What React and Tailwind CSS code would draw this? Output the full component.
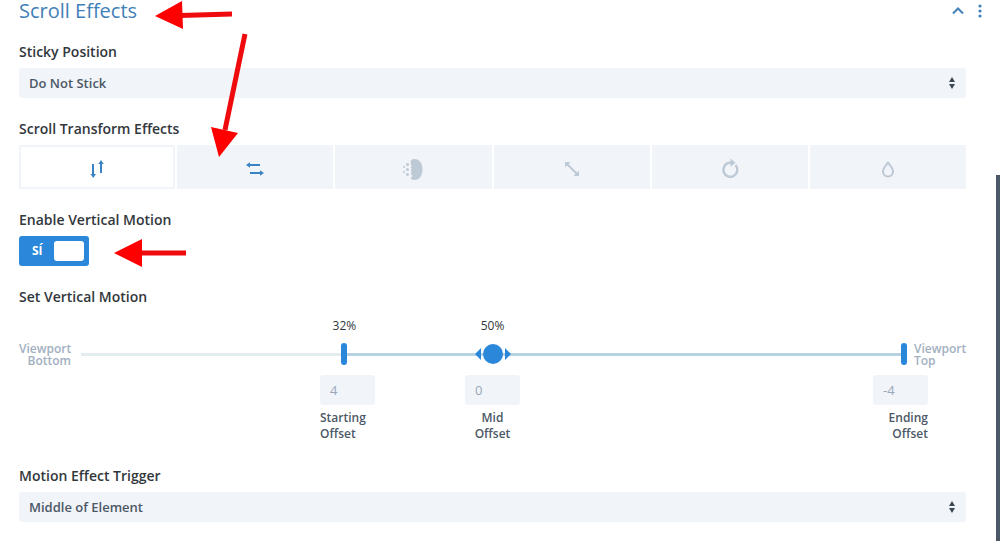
import React, { useState } from 'react';
import clsx from 'clsx';

const TABS = [
  { id: 'vertical', label: 'Vertical Motion', enabled: true },
  { id: 'horizontal', label: 'Horizontal Motion', enabled: true },
  { id: 'fade', label: 'Fading In and Out', enabled: false },
  { id: 'scale', label: 'Scaling Up and Down', enabled: false },
  { id: 'rotate', label: 'Rotating', enabled: false },
  { id: 'blur', label: 'Blur', enabled: false },
];

const OFFSETS = [
  { id: 'start', top: 'Starting', value: '4', className: 'col-start-2 justify-self-start', align: 'text-left' },
  { id: 'mid', top: 'Mid', value: '0', className: 'col-start-3 justify-self-start', align: 'text-center' },
  { id: 'end', top: 'Ending', value: '-4', className: 'col-start-4 justify-self-start', align: 'text-right' },
];

// All tab icons share a 28x28 box
function TabIcon({ id }) {
  const shapes = {
    vertical: (
      <>
        <path d="M10 9v11M18 8v10" stroke="currentColor" strokeWidth="2" />
        <path d="M7.500 19h5.500l-2.750 4zM15.250 9h5.500L18 5z" fill="currentColor" />
      </>
    ),
    horizontal: (
      <>
        <path d="M8 10h11M9 18h11" stroke="currentColor" strokeWidth="2" />
        <path d="M9 7.250v5.500L5 10zM19 15.250v5.500L23 18z" fill="currentColor" />
      </>
    ),
    fade: (
      <>
        <path d="M15.500 4C20.500 4 23.500 8.500 23.500 14.500S20.500 25 15.500 25c-2.500 0-4-1-4-2.500 1.500 .2 2.300-1.300 1.500-2.500-1.500 0-1.500-2.500 0-3-1.500-.5-1.500-2.500 0-3-1.500-.5-1.500-2.500 0-3-1.500-.5-1-2.300-1.500-3.500 0-2 1.500-3.500 4-3.500z" fill="currentColor" />
        <g fill="currentColor">
          <circle cx="8.500" cy="9.500" r="1.500" />
          <circle cx="8.500" cy="14.500" r="1.500" />
          <circle cx="8.500" cy="19.500" r="1.500" />
          <circle cx="5" cy="12" r="1" />
          <circle cx="5" cy="17" r="1" />
        </g>
      </>
    ),
    scale: (
      <>
        <path d="M9 9l10 10" stroke="currentColor" strokeWidth="2" />
        <path d="M7 7h5.500L7 12.500zM21 21h-5.500l5.500-5.500z" fill="currentColor" />
      </>
    ),
    rotate: (
      <>
        <path d="M19.500 10a7 7 0 1 1-6-2.200h2" fill="none" stroke="currentColor" strokeWidth="2.400" />
        <path d="M14.500 3.500l5 4.300-5 4.300z" fill="currentColor" />
      </>
    ),
    blur: (
      <path d="M14 7.500c2 3 5 5.500 5 9a5 5 0 0 1-10 0c0-3.500 3-6 5-9z" fill="none" stroke="currentColor" strokeWidth="2" strokeLinejoin="round" />
    ),
  };
  return (
    <svg viewBox="0 0 28 28" className="size-7" aria-hidden="true">
      {shapes[id]}
    </svg>
  );
}

function SelectField({ id, label, options }) {
  return (
    <div className="flex flex-col gap-1.5">
      <label htmlFor={id} className="text-sm leading-5 font-semibold text-[#32373c]">{label}</label>
      <div className="relative">
        <select
          id={id}
          className="block h-[30px] w-full appearance-none rounded-[3px] bg-[#f1f4f9] px-2.5 pt-0.5 text-[13px] font-semibold text-[#4c5866]"
        >
          {options.map((option) => <option key={option}>{option}</option>)}
        </select>
        <svg viewBox="0 0 6 12" className="pointer-events-none absolute top-[9px] right-[11px] h-3 w-1.5 fill-[#3e4751]" aria-hidden="true">
          <path d="M0 5l3-5 3 5zM0 7h6l-3 5z" />
        </svg>
      </div>
    </div>
  );
}

const rangeBase =
  'pointer-events-none absolute top-0 h-6 appearance-none bg-transparent [&::-webkit-slider-thumb]:pointer-events-auto [&::-webkit-slider-thumb]:appearance-none [&::-webkit-slider-thumb]:bg-[#2b87da]';
const barThumb =
  '-left-[3px] w-[calc(100%+6px)] [&::-webkit-slider-thumb]:h-[22px] [&::-webkit-slider-thumb]:w-1.5 [&::-webkit-slider-thumb]:rounded-[3px]';
const roundThumb =
  '-left-2.5 w-[calc(100%+20px)] [&::-webkit-slider-thumb]:size-5 [&::-webkit-slider-thumb]:rounded-full';

function MotionSlider() {
  const [start, setStart] = useState(32);
  const [mid, setMid] = useState(50);
  const [end, setEnd] = useState(100);

  return (
    <div className="flex flex-col pt-[11px] pb-[3px]">
      <div className="flex items-end gap-2.5">
        <span className="-mb-px w-[52px] text-right text-xs leading-3 font-semibold text-[#a2b0c1]">Viewport Bottom</span>
        <div className="flex-1">
          <div className="relative h-4 text-xs leading-4 text-[#32373c]">
            <span className="absolute -translate-x-1/2" style={{ left: `${start}%` }}>{start}%</span>
            <span className="absolute -translate-x-1/2" style={{ left: `${mid}%` }}>{mid}%</span>
          </div>
          <div className="relative mt-2 flex h-6 items-center">
            <div className="h-[3px] w-full bg-[#e3ecee]">
              <div className="h-full bg-[#b7d3e3]" style={{ marginLeft: `${start}%`, width: `${end - start}%` }} />
            </div>
            <svg viewBox="0 0 36 12" className="absolute top-1.5 h-3 w-9 -translate-x-1/2 fill-[#2b87da]" style={{ left: `${mid}%` }} aria-hidden="true">
              <path d="M0 6l6-6v12zM36 6l-6-6v12z" />
            </svg>
            <input type="range" aria-label="Start" value={start} onChange={(e) => setStart(Number(e.target.value))} className={clsx(rangeBase, barThumb)} />
            <input type="range" aria-label="Middle" value={mid} onChange={(e) => setMid(Number(e.target.value))} className={clsx(rangeBase, roundThumb)} />
            <input type="range" aria-label="End" value={end} onChange={(e) => setEnd(Number(e.target.value))} className={clsx(rangeBase, barThumb)} />
          </div>
        </div>
        <span className="-mb-px w-[52px] text-xs leading-3 font-semibold text-[#a2b0c1]">Viewport Top</span>
      </div>
      <div className="mt-[9px] grid grid-cols-[301fr_145fr_408fr_93fr]">
        {OFFSETS.map((field) => (
          <div key={field.id} className={clsx('flex w-[55px] flex-col gap-[5px]', field.className)}>
            <input
              id={`offset-${field.id}`}
              defaultValue={field.value}
              className="h-[30px] w-full rounded-[3px] bg-[#f1f4f9] px-2.5 text-[13px] text-[#98a7b8]"
            />
            <label htmlFor={`offset-${field.id}`} className={clsx('text-xs leading-4 font-semibold text-[#4c5866]', field.align)}>
              {field.top}<br />Offset
            </label>
          </div>
        ))}
      </div>
    </div>
  );
}

function Arrows() {
  return (
    <svg width="260" height="280" className="pointer-events-none absolute top-0 left-0" aria-hidden="true">
      <g stroke="#ee0a0d" strokeWidth="5">
        <path d="M180 15.500L232 14" />
        <path d="M225 130L245 34" />
        <path d="M140 253H186" />
      </g>
      <g fill="#fe0000">
        <path d="M155 16L182 1l1 28z" />
        <path d="M219 157L211 127l27 6z" />
        <path d="M114 253L142 239v28z" />
      </g>
    </svg>
  );
}

function App() {
  const [tab, setTab] = useState('vertical');
  const [enabled, setEnabled] = useState(true);

  return (
    <div className="relative flex bg-white font-['Open_Sans',sans-serif]">
      <main className="flex min-w-0 flex-1 flex-col gap-[21px] pr-[30px] pb-[19px] pl-[19px]">
        <header className="-mr-4 flex h-[21px] items-center justify-between text-[#4180b8]">
          <h2 className="text-xl leading-5">Scroll Effects</h2>
          <div className="flex items-center gap-3.5">
            <button type="button" aria-label="Collapse" className="flex h-5 items-center">
              <svg viewBox="0 0 12 8" className="h-2 w-3" aria-hidden="true">
                <path d="M1 6.500l5-5 5 5" fill="none" stroke="currentColor" strokeWidth="2" />
              </svg>
            </button>
            <button type="button" aria-label="More options" className="flex h-5 items-center">
              <svg viewBox="0 0 4 14" className="h-3.5 w-1 fill-current" aria-hidden="true">
                <circle cx="2" cy="2" r="1.600" />
                <circle cx="2" cy="7" r="1.600" />
                <circle cx="2" cy="12" r="1.600" />
              </svg>
            </button>
          </div>
        </header>

        <SelectField id="sticky" label="Sticky Position" options={['Do Not Stick', 'Stick to Top', 'Stick to Bottom']} />

        <section className="flex flex-col gap-1.5">
          <h3 className="text-sm leading-5 font-semibold text-[#32373c]">Scroll Transform Effects</h3>
          <div className="grid grid-cols-6 gap-0.5">
            {TABS.map((item) => (
              <button
                key={item.id}
                type="button"
                aria-label={item.label}
                onClick={() => setTab(item.id)}
                className={clsx(
                  'flex h-11 items-center justify-center border-2 border-[#f1f4f9] pt-1',
                  tab === item.id ? 'bg-white' : 'bg-[#f1f4f9]',
                  item.enabled ? 'text-[#3a83c4]' : 'text-[#bec9d6]'
                )}
              >
                <TabIcon id={item.id} />
              </button>
            ))}
          </div>
        </section>

        <section className="flex flex-col items-start gap-1.5">
          <label htmlFor="enable-motion" className="text-sm leading-5 font-semibold text-[#32373c]">Enable Vertical Motion</label>
          <label
            className={clsx(
              'flex h-[30px] w-[70px] items-center justify-between rounded-[3px] pr-[5px] pl-[13px]',
              enabled ? 'bg-[#2b87da]' : 'flex-row-reverse bg-[#98a7b8]'
            )}
          >
            <input id="enable-motion" type="checkbox" checked={enabled} onChange={() => setEnabled(!enabled)} className="sr-only" />
            <span className="text-xs font-bold text-white">{enabled ? 'SÍ' : 'NO'}</span>
            <span className="h-5 w-[30px] rounded-[3px] bg-white" />
          </label>
        </section>

        <section>
          <h3 className="text-sm leading-5 font-semibold text-[#32373c]">Set Vertical Motion</h3>
          <MotionSlider />
        </section>

        <SelectField id="trigger" label="Motion Effect Trigger" options={['Middle of Element', 'Top of Element', 'Bottom of Element']} />
      </main>
      <aside className="mt-[175px] w-1 bg-[#4c5866]" />
      <Arrows />
    </div>
  );
}

export default App;
